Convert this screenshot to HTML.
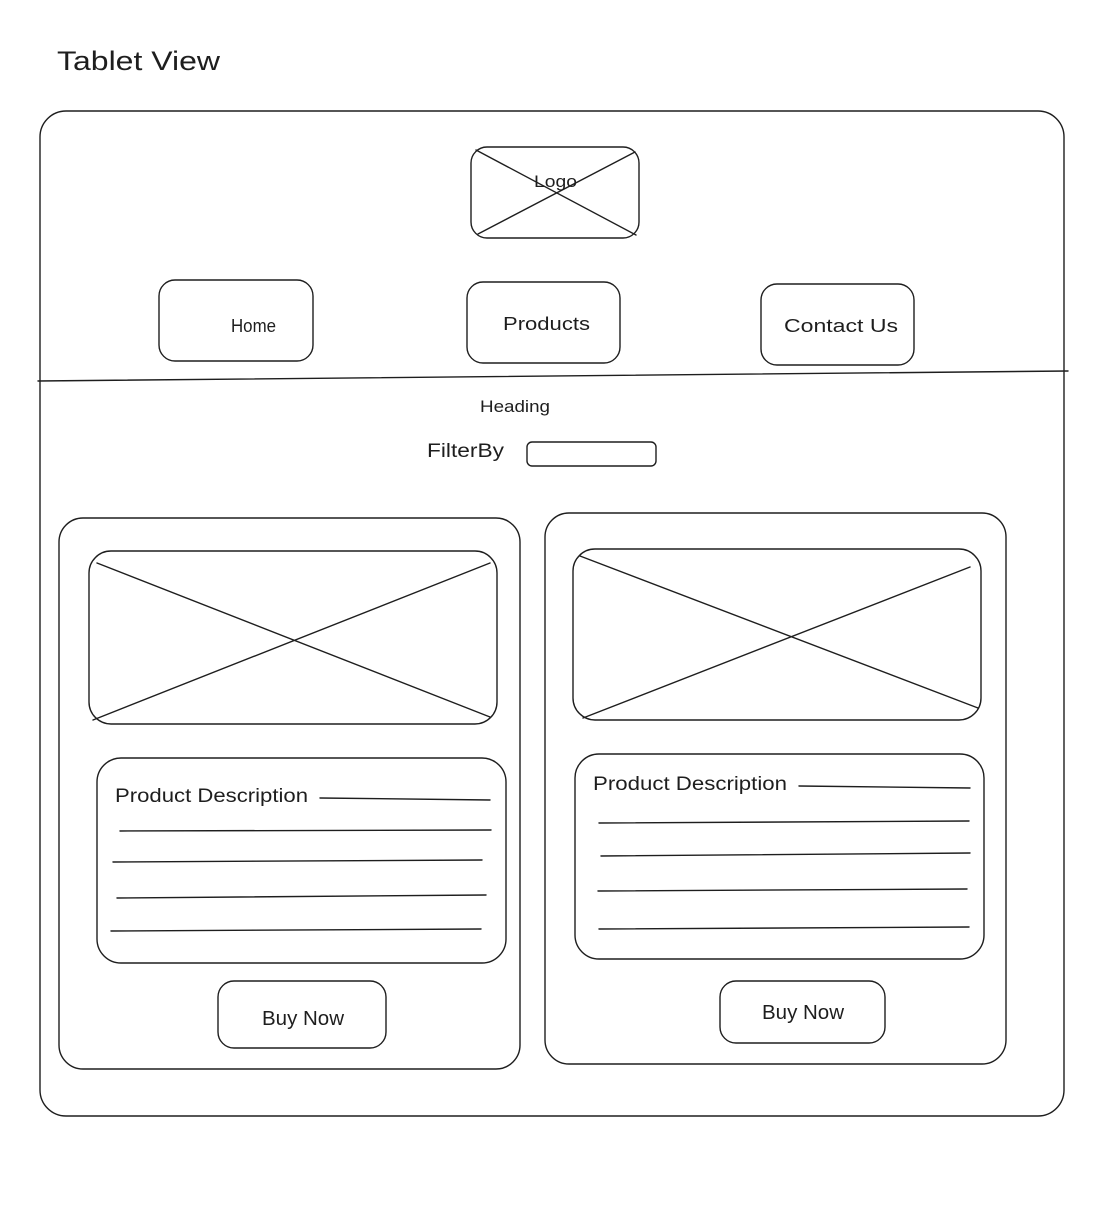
<!DOCTYPE html>
<html><head><meta charset="utf-8"><style>
html,body{margin:0;padding:0;background:#fff;}
svg{display:block}
text{font-family:"Liberation Sans",sans-serif;fill:#1e1e1e}
</style></head><body>
<svg width="1120" height="1218" viewBox="0 0 1120 1218" xmlns="http://www.w3.org/2000/svg">
<rect width="1120" height="1218" fill="#fff"/>
<g fill="none" stroke="#1e1e1e" stroke-width="1.4" stroke-linecap="round">
<rect x="40" y="111" width="1024" height="1005" rx="26"/>
<rect x="471" y="147" width="168" height="91" rx="16"/>
<line x1="476" y1="150" x2="636" y2="235"/>
<line x1="478" y1="234" x2="635" y2="152"/>
<rect x="159" y="280" width="154" height="81" rx="16"/>
<rect x="467" y="282" width="153" height="81" rx="16"/>
<rect x="761" y="284" width="153" height="81" rx="16"/>
<line x1="38" y1="381" x2="1068" y2="371"/>
<rect x="527" y="442" width="129" height="24" rx="5"/>
<rect x="59" y="518" width="461" height="551" rx="24"/>
<rect x="89" y="551" width="408" height="173" rx="22"/>
<line x1="97" y1="563" x2="490" y2="717"/>
<line x1="93" y1="720" x2="490" y2="563"/>
<rect x="97" y="758" width="409" height="205" rx="24"/>
<line x1="320" y1="798" x2="490" y2="800"/>
<line x1="120" y1="831" x2="491" y2="830"/>
<line x1="113" y1="862" x2="482" y2="860"/>
<line x1="117" y1="898" x2="486" y2="895"/>
<line x1="111" y1="931" x2="481" y2="929"/>
<rect x="218" y="981" width="168" height="67" rx="16"/>
<rect x="545" y="513" width="461" height="551" rx="24"/>
<rect x="573" y="549" width="408" height="171" rx="22"/>
<line x1="580" y1="556" x2="978" y2="708"/>
<line x1="583" y1="718" x2="970" y2="567"/>
<rect x="575" y="754" width="409" height="205" rx="24"/>
<line x1="799" y1="786" x2="970" y2="788"/>
<line x1="599" y1="823" x2="969" y2="821"/>
<line x1="601" y1="856" x2="970" y2="853"/>
<line x1="598" y1="891" x2="967" y2="889"/>
<line x1="599" y1="929" x2="969" y2="927"/>
<rect x="720" y="981" width="165" height="62" rx="16"/>
</g>
<text x="57" y="70" font-size="27" textLength="163" lengthAdjust="spacingAndGlyphs">Tablet View</text>
<text x="534" y="187" font-size="17" textLength="43" lengthAdjust="spacingAndGlyphs">Logo</text>
<text x="231" y="332" font-size="18" textLength="45" lengthAdjust="spacingAndGlyphs">Home</text>
<text x="503" y="330" font-size="18" textLength="87" lengthAdjust="spacingAndGlyphs">Products</text>
<text x="784" y="332" font-size="18" textLength="114" lengthAdjust="spacingAndGlyphs">Contact Us</text>
<text x="480" y="412" font-size="17" textLength="70" lengthAdjust="spacingAndGlyphs">Heading</text>
<text x="427" y="457" font-size="19" textLength="77" lengthAdjust="spacingAndGlyphs">FilterBy</text>
<text x="115" y="802" font-size="19" textLength="193" lengthAdjust="spacingAndGlyphs">Product Description</text>
<text x="593" y="790" font-size="19" textLength="194" lengthAdjust="spacingAndGlyphs">Product Description</text>
<text x="262" y="1025" font-size="20" textLength="82" lengthAdjust="spacingAndGlyphs">Buy Now</text>
<text x="762" y="1019" font-size="20" textLength="82" lengthAdjust="spacingAndGlyphs">Buy Now</text>
</svg>
</body></html>
